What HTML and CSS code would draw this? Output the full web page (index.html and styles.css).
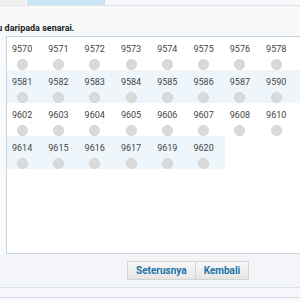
FILE: index.html
```html
<!DOCTYPE html>
<html>
	<head>
		<meta charset="UTF-8">
		<title>Pilih nombor</title>
		<link rel="stylesheet" href="styles.css">
	</head>
	<body>
		<div class="page">
			<div class="tabs">
				<span class="tab">Utama</span>
				<span class="tab tabOn">Senarai Nombor</span>
			</div>
			<p class="prompt">Sila pilih satu daripada senarai.</p>
			<div class="listBox">
				<table class="numTable">
					<tr>
						<td><div class="cell"><span class="num">9570</span><span class="dot"></span></div></td>
						<td><div class="cell"><span class="num">9571</span><span class="dot"></span></div></td>
						<td><div class="cell"><span class="num">9572</span><span class="dot"></span></div></td>
						<td><div class="cell"><span class="num">9573</span><span class="dot"></span></div></td>
						<td><div class="cell"><span class="num">9574</span><span class="dot"></span></div></td>
						<td><div class="cell"><span class="num">9575</span><span class="dot"></span></div></td>
						<td><div class="cell"><span class="num">9576</span><span class="dot"></span></div></td>
						<td><div class="cell"><span class="num">9578</span><span class="dot"></span></div></td>
						<td><div class="cell"><span class="num">9579</span><span class="dot"></span></div></td>
					</tr>
					<tr>
						<td><div class="cell"><span class="num">9581</span><span class="dot"></span></div></td>
						<td><div class="cell"><span class="num">9582</span><span class="dot"></span></div></td>
						<td><div class="cell"><span class="num">9583</span><span class="dot"></span></div></td>
						<td><div class="cell"><span class="num">9584</span><span class="dot"></span></div></td>
						<td><div class="cell"><span class="num">9585</span><span class="dot"></span></div></td>
						<td><div class="cell"><span class="num">9586</span><span class="dot"></span></div></td>
						<td><div class="cell"><span class="num">9587</span><span class="dot"></span></div></td>
						<td><div class="cell"><span class="num">9590</span><span class="dot"></span></div></td>
						<td><div class="cell"><span class="num">9591</span><span class="dot"></span></div></td>
					</tr>
					<tr>
						<td><div class="cell"><span class="num">9602</span><span class="dot"></span></div></td>
						<td><div class="cell"><span class="num">9603</span><span class="dot"></span></div></td>
						<td><div class="cell"><span class="num">9604</span><span class="dot"></span></div></td>
						<td><div class="cell"><span class="num">9605</span><span class="dot"></span></div></td>
						<td><div class="cell"><span class="num">9606</span><span class="dot"></span></div></td>
						<td><div class="cell"><span class="num">9607</span><span class="dot"></span></div></td>
						<td><div class="cell"><span class="num">9608</span><span class="dot"></span></div></td>
						<td><div class="cell"><span class="num">9610</span><span class="dot"></span></div></td>
						<td><div class="cell"><span class="num">9612</span><span class="dot"></span></div></td>
					</tr>
					<tr>
						<td><div class="cell"><span class="num">9614</span><span class="dot"></span></div></td>
						<td><div class="cell"><span class="num">9615</span><span class="dot"></span></div></td>
						<td><div class="cell"><span class="num">9616</span><span class="dot"></span></div></td>
						<td><div class="cell"><span class="num">9617</span><span class="dot"></span></div></td>
						<td><div class="cell"><span class="num">9619</span><span class="dot"></span></div></td>
						<td><div class="cell"><span class="num">9620</span><span class="dot"></span></div></td>
					</tr>
				</table>
			</div>
			<div class="buttons">
				<input type="button" class="btn" value="Seterusnya" />
				<input type="button" class="btn" value="Kembali" />
			</div>
			<div class="footer"></div>
		</div>
	</body>
</html>
```

FILE: styles.css
```css
*{
	margin: 0px;
	padding: 0px;
	box-sizing: border-box;
}
body{
	background: #f8f9fb;
	font-family: Roboto, "Liberation Sans", sans-serif;
	overflow: hidden;
}
.page{
	width: 300px;
	height: 300px;
	overflow: hidden;
}
.tabs{
	display: flex;
	height: 6px;
	overflow: hidden;
	border-bottom: 1px solid #dfe3e9;
	align-items: flex-end;
}
.tab{
	height: 20px;
	width: 25px;
	margin-right: 2px;
	background: #eeeeee;
	color: #999;
	font-size: 9px;
	line-height: 22px;
	text-align: right;
	white-space: nowrap;
	overflow: hidden;
}
.tabOn{
	width: 78px;
	background: #c9e6f7;
	color: #e8f4fb;
	text-align: center;
}
.prompt{
	margin: 17px 0 2px -52px;
	font-size: 9px;
	line-height: 11px;
	font-weight: bold;
	color: #1e1e1e;
	white-space: nowrap;
}
.listBox{
	width: 340px;
	height: 218px;
	margin-left: 6px;
	background: #fff;
	border: 1px solid #c8d5e1;
}
.numTable{
	border-collapse: collapse;
	border-spacing: 0;
}
.numTable td{
	width: 36.3px;
	height: 32px;
	padding: 0;
	vertical-align: top;
}
.numTable tr:nth-child(even) td{
	background: #eef6fc;
}
.cell{
	display: inline-flex;
	flex-direction: column;
	align-items: center;
	margin: 3px 0 0 5px;
}
.num{
	font-size: 9px;
	line-height: 12px;
	color: #444;
}
.dot{
	width: 11px;
	height: 11px;
	margin-top: 4px;
	border-radius: 50%;
	background: #dadada;
	border: 1px solid #d2d2d2;
}
.buttons{
	display: flex;
	height: 34px;
	padding: 7px 0 0 127px;
	background: #f3f5f9;
	border-bottom: 1px solid #dbe2ea;
}
.btn{
	height: 19px;
	padding: 0 8px;
	font-family: Roboto, "Liberation Sans", sans-serif;
	font-size: 10px;
	font-weight: bold;
	color: #2272a8;
	background: linear-gradient(#f8f8f8, #e5e5e5);
	border: 1px solid #d3d3d3;
	border-radius: 0;
}
.btn + .btn{
	margin-left: -1px;
}
.footer{
	height: 10px;
	background: #f7f8fb;
	border-bottom: 1px solid #d3dde7;
}
```
